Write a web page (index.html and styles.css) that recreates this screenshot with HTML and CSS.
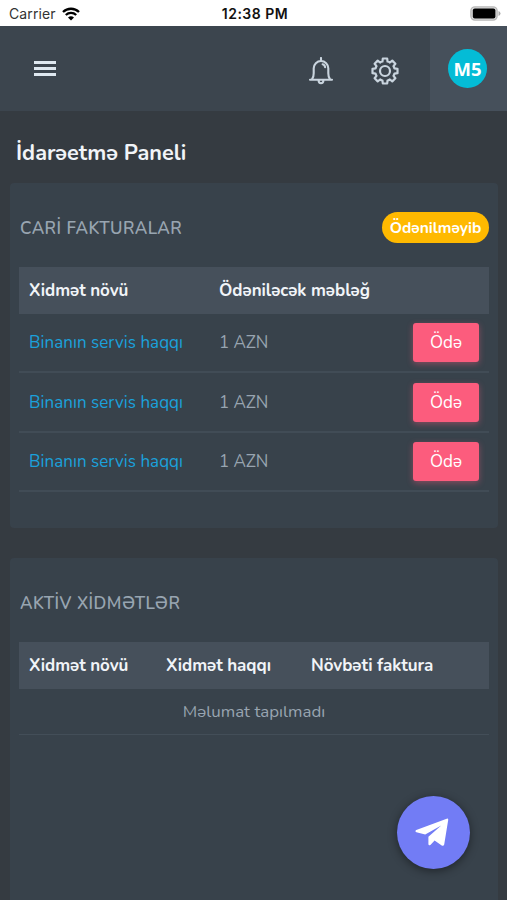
FILE: index.html
```html
<!DOCTYPE html>
<html lang="az">
<head>
<meta charset="utf-8">
<meta name="viewport" content="width=device-width, initial-scale=1">
<title>İdarəetmə Paneli</title>
<link rel="stylesheet" href="styles.css">
</head>
<body>
<div class="status">
  <div class="carrier"><span>Carrier</span>
    <svg width="18" height="14" viewBox="0 0 18 14" fill="none" stroke="#000" stroke-width="2.3"><path d="M1 5a11.5 11.5 0 0 1 16 0M3.8 8a7.5 7.5 0 0 1 10.4 0"/><path d="M9 13.6 6 10.6a4.3 4.3 0 0 1 6 0z" fill="#000" stroke="none"/></svg>
  </div>
  <div class="clock">12:38 PM</div>
  <div class="power">
    <svg width="31" height="15" viewBox="0 0 31 15"><rect x=".9" y=".9" width="26.2" height="13.2" rx="4" fill="#ddd" stroke="#b8b8b8" stroke-width="1.4"/><rect x="2.8" y="2.6" width="22.6" height="9.8" rx="2" fill="#000"/><path d="M28.5 5q2 .7 2 2.5t-2 2.5z" fill="#aaa"/></svg>
  </div>
</div>
<header class="topbar">
  <button class="menu" aria-label="Menyu"><i></i><i></i><i></i></button>
  <nav class="tools">
    <svg width="26" height="28" viewBox="0 0 26 28" fill="none" stroke="#c9d4de" stroke-width="2.1" stroke-linecap="round" stroke-linejoin="round"><path d="M13 1v2.500M2 22.800h22M4 22.300c1.300-1.400 1.700-3.200 1.700-6v-5a7.300 7.300 0 0 1 14.600 0v5c0 2.800.4 4.600 1.700 6M10.600 23.300c0 4 4.800 4 4.800 0M14.600 7.200c1.600.4 2.400 1.400 2.500 3"/></svg>
    <svg width="28" height="28" viewBox="-14 -14 28 28" fill="none" stroke="#c9d4de" stroke-width="2.2" stroke-linejoin="round"><path d="M-2.2-12.5H2.2L2.54-9.47Q3.8-9.2 4.9-8.49L7.28-10.4 10.4-7.28 8.49-4.9Q9.2-3.8 9.47-2.54L12.5-2.2V2.2L9.47 2.54Q9.2 3.8 8.49 4.9L10.4 7.28 7.28 10.4 4.9 8.49Q3.8 9.2 2.54 9.47L2.2 12.5H-2.2L-2.54 9.47Q-3.8 9.2-4.9 8.49L-7.28 10.4-10.4 7.28-8.49 4.9Q-9.2 3.8-9.47 2.54L-12.5 2.2V-2.2L-9.47-2.54Q-9.2-3.8-8.49-4.9L-10.4-7.28-7.28-10.4-4.9-8.49Q-3.8-9.2-2.54-9.47Z"/><circle r="5"/></svg>
  </nav>
  <div class="user"><span class="avatar">M5</span></div>
</header>
<main>
  <h1><span>İdarəetmə Paneli</span></h1>
  <section class="card invoices">
    <div class="card-head"><h2>CARİ FAKTURALAR</h2><span class="badge">Ödənilməyib</span></div>
    <div class="row thead"><span>Xidmət növü</span><span>Ödəniləcək məbləğ</span></div>
    <div class="row"><a>Binanın servis haqqı</a><span>1 AZN</span><button class="pay">Ödə</button></div>
    <div class="row"><a>Binanın servis haqqı</a><span>1 AZN</span><button class="pay">Ödə</button></div>
    <div class="row"><a>Binanın servis haqqı</a><span>1 AZN</span><button class="pay">Ödə</button></div>
  </section>
  <section class="card services">
    <div class="card-head"><h2>AKTİV XİDMƏTLƏR</h2></div>
    <div class="row thead"><span>Xidmət növü</span><span>Xidmət haqqı</span><span>Növbəti faktura</span></div>
    <div class="empty">Məlumat tapılmadı</div>
  </section>
</main>
<button class="fab" aria-label="Mesaj">
  <svg width="34" height="29" viewBox="0 0 34 29" fill="#fff"><path d="M1.300 12 31.700.7q1.700-.5 1.500 1.200L29.200 26.400q-.6 2.200-2.500 1.100L19.600 22.600l-4.200 4.300q-1.900 1.200-2-1V18.800L26.200 7.400 10.200 16.400 1.400 14.300q-1.900-1.100-.1-2.300z"/></svg>
</button>
</body>
</html>
```
FILE: styles.css
```css
* { box-sizing: border-box; }
body {
  margin: 0;
  height: 900px;
  overflow: hidden;
  display: flex;
  flex-direction: column;
  background: #353b41;
  color: #98a5b1;
  font: 17px Nunito, Lato, "Noto Sans", sans-serif;
}
button { border: 0; padding: 0; font: inherit; }
svg { display: block; flex: none; }
.status {
  height: 26px;
  flex: none;
  display: grid;
  grid-template-columns: 1fr auto 1fr;
  align-items: center;
  padding: 1px 6px 0 9px;
  background: #fff;
  color: #111;
  font: 14px Inter, sans-serif;
}
.carrier { display: flex; align-items: center; gap: 6px; color: #333; letter-spacing: .1px; }
.clock { font-weight: 600; letter-spacing: .5px; }
.power { justify-self: end; }
.topbar {
  height: 85px;
  flex: none;
  display: flex;
  align-items: center;
  background: #3c454e;
}
.menu {
  margin-left: 34px;
  width: 22px;
  display: grid;
  gap: 3px;
  background: none;
}
.menu i { height: 3px; background: #dfe8f0; }
.tools { margin: 4px 31px 0 auto; display: flex; align-items: center; gap: 37px; }
.user { width: 77px; height: 100%; display: grid; place-items: center; padding: 0 2px 1px 0; background: #46505b; }
.avatar {
  width: 39px;
  height: 39px;
  border-radius: 50%;
  display: grid;
  place-items: center;
  background: #04bcd6;
  color: #fff;
  font: bold 18.5px "Open Sans", sans-serif;
}
main { flex: 1; min-height: 0; padding: 0 9px 0 10px; }
h1 {
  height: 72px;
  margin: 0;
  padding: 11px 0 0 6px;
  display: flex;
  align-items: center;
  color: #f1f4f8;
  font-size: 21.7px;
  font-weight: 700;
}
h2 { margin: 0; padding: 1px 0 0 1px; font-size: 17px; font-weight: 650; white-space: nowrap; letter-spacing: .45px; }
.card { padding: 0 9px; border-radius: 4px; background: #38424b; }
.invoices { height: 345px; }
.services { height: 360px; margin-top: 30px; }
.card-head { height: 84px; padding-top: 5px; display: flex; justify-content: space-between; align-items: center; }
.badge {
  width: 107px;
  height: 31px;
  border-radius: 16px;
  display: grid;
  place-items: center;
  background: #ffb900;
  color: #fff;
  font-size: 15.6px;
  font-weight: 700;
}
.row {
  height: 59.4px;
  display: grid;
  grid-template-columns: 190px 1fr 66px;
  align-items: center;
  padding: 0 10px;
  border-bottom: 2px solid #414c56;
  white-space: nowrap;
}
.row.thead { height: 47px; border: 0; background: #46505b; color: #f1f4f8; font-weight: 700; letter-spacing: -.04px; }
.services .row { grid-template-columns: 137px 145px 1fr; }
.row a { color: #1ba1dc; letter-spacing: .04px; }
.pay {
  height: 39px;
  border-radius: 3px;
  background: #fc5c7d;
  color: #fff;
  box-shadow: 0 2px 6px rgba(252, 92, 125, .4);
}
.empty { height: 46px; padding-bottom: 1px; display: grid; place-items: center; font-size: 16.9px; border-bottom: 1px solid #434e58; }
.fab {
  position: absolute;
  left: 397px;
  top: 796px;
  width: 73px;
  height: 73px;
  border-radius: 50%;
  display: grid;
  place-items: center;
  padding: 0 4px 0 0;
  background: #727cf5;
  box-shadow: 0 2px 10px rgba(0, 0, 0, .45);
}
```
